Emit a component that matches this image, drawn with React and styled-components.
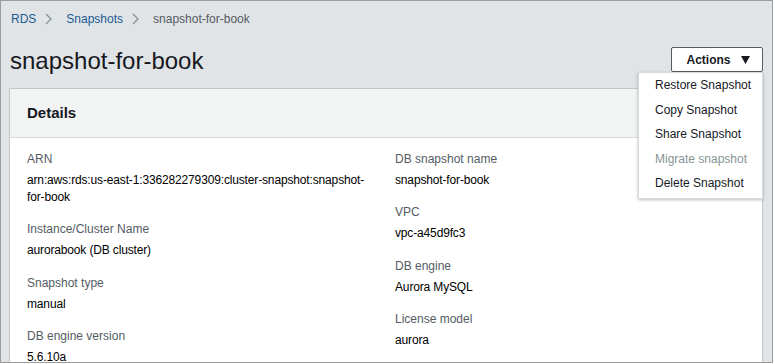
import React from "react";
import styled, { createGlobalStyle } from "styled-components";

const GlobalStyle = createGlobalStyle`
body {
  margin: 0;
  font-family: "Liberation Sans", Arial, sans-serif;
  background: #ffffff;
}
* { box-sizing: border-box; }
`

const leftFields = [
  { label: "ARN", value: "arn:aws:rds:us-east-1:336282279309:cluster-snapshot:snapshot-for-book" },
  { label: "Instance/Cluster Name", value: "aurorabook (DB cluster)" },
  { label: "Snapshot type", value: "manual" },
  { label: "DB engine version", value: "5.6.10a" },
]

const rightFields = [
  { label: "DB snapshot name", value: "snapshot-for-book" },
  { label: "VPC", value: "vpc-a45d9fc3" },
  { label: "DB engine", value: "Aurora MySQL" },
  { label: "License model", value: "aurora" },
]

const menuItems = [
  { text: "Restore Snapshot" },
  { text: "Copy Snapshot" },
  { text: "Share Snapshot" },
  { text: "Migrate snapshot", disabled: true },
  { text: "Delete Snapshot" },
]

const Chevron = () => (
  <ChevronIcon width="7" height="12" viewBox="0 0 7 12">
    <path d="M1 1l5 5-5 5" fill="none" stroke="#879596" strokeWidth="1.4" />
  </ChevronIcon>
)

const App = () => {
  return (
    <>
      <GlobalStyle />
      <Frame>
        <Breadcrumbs>
          <Crumb href="#">RDS</Crumb>
          <Chevron />
          <Crumb href="#">Snapshots</Crumb>
          <Chevron />
          <Current>snapshot-for-book</Current>
        </Breadcrumbs>

        <TitleRow>
          <Title>snapshot-for-book</Title>
          <ActionsWrap>
            <ActionsButton>
              Actions
              <svg width="9" height="8" viewBox="0 0 9 8">
                <path d="M0 0h9L4.5 8z" fill="#16191f" />
              </svg>
            </ActionsButton>
            <Menu>
              {menuItems.map((item) => (
                <MenuItem key={item.text} disabled={item.disabled}>
                  {item.text}
                </MenuItem>
              ))}
            </Menu>
          </ActionsWrap>
        </TitleRow>

        <Card>
          <CardHeader>Details</CardHeader>
          <CardBody>
            <Column wrapAt={20}>
              {leftFields.map((f) => (
                <Field key={f.label}>
                  <Label>{f.label}</Label>
                  <Value>{f.value}</Value>
                </Field>
              ))}
            </Column>
            <Column>
              {rightFields.map((f) => (
                <Field key={f.label}>
                  <Label>{f.label}</Label>
                  <Value>{f.value}</Value>
                </Field>
              ))}
            </Column>
          </CardBody>
        </Card>
      </Frame>
    </>
  )
}

const Frame = styled.div`
width: 773px;
height: 363px;
border: 1px solid #9a9d9f;
background: #e1e4e6;
padding: 10px 9px 0 8px;
overflow: hidden;
`

const Breadcrumbs = styled.nav`
display: flex;
align-items: center;
height: 16px;
padding-left: 2px;
font-size: 12px;
`

const Crumb = styled.a`
color: #1a5b94;
text-decoration: none;
`

const ChevronIcon = styled.svg`
margin: 0 14px 0 9px;
`

const Current = styled.span`
color: #545b64;
`

const TitleRow = styled.div`
display: flex;
justify-content: space-between;
align-items: flex-start;
margin-top: 19px;
height: 42px;
`

const Title = styled.h1`
margin: 0;
margin-top: 1px;
padding-left: 1px;
font-size: 24px;
font-weight: 400;
line-height: 28px;
color: #16191f;
`

const ActionsWrap = styled.div`
position: relative;
margin-top: 1px;
`

const ActionsButton = styled.button`
width: 92px;
height: 25px;
background: #ffffff;
border: 1px solid #545b64;
border-radius: 2px;
font-family: "Liberation Sans", Arial, sans-serif;
font-size: 12px;
font-weight: 700;
color: #16191f;
display: flex;
align-items: center;
justify-content: center;
gap: 10px;
padding: 0 0 0 2px;
`

const Menu = styled.ul`
position: absolute;
top: 25px;
right: 0;
width: 125px;
margin: 0;
padding: 0 0 2px;
list-style: none;
background: #ffffff;
border: 1px solid #d5dbdb;
box-shadow: 0 1px 3px rgba(0, 0, 0, 0.25);
z-index: 2;
`

const MenuItem = styled.li`
height: 24.6px;
line-height: 24.6px;
padding-left: 16px;
font-size: 12px;
color: ${(p) => (p.disabled ? "#879596" : "#16191f")};
white-space: nowrap;
`

const Card = styled.section`
background: #ffffff;
border: 1px solid #c3c7c9;
height: 300px;
`

const CardHeader = styled.h2`
margin: 0;
height: 49px;
line-height: 48px;
padding-left: 17px;
background: #f2f3f3;
border-bottom: 1px solid #d5dbdb;
font-size: 15px;
font-weight: 700;
color: #16191f;
`

const CardBody = styled.div`
display: grid;
grid-template-columns: 368px 1fr;
padding: 13px 17px 0;
`

const Column = styled.div`
display: flex;
flex-direction: column;
padding-right: ${(p) => p.wrapAt || 0}px;
`

const Field = styled.div`
margin-bottom: 15.4px;
`

const Label = styled.div`
font-size: 12px;
line-height: 17px;
color: #545b64;
margin-bottom: 4px;
`

const Value = styled.div`
font-size: 12px;
line-height: 17px;
letter-spacing: -0.15px;
color: #000000;
`

export default App;
